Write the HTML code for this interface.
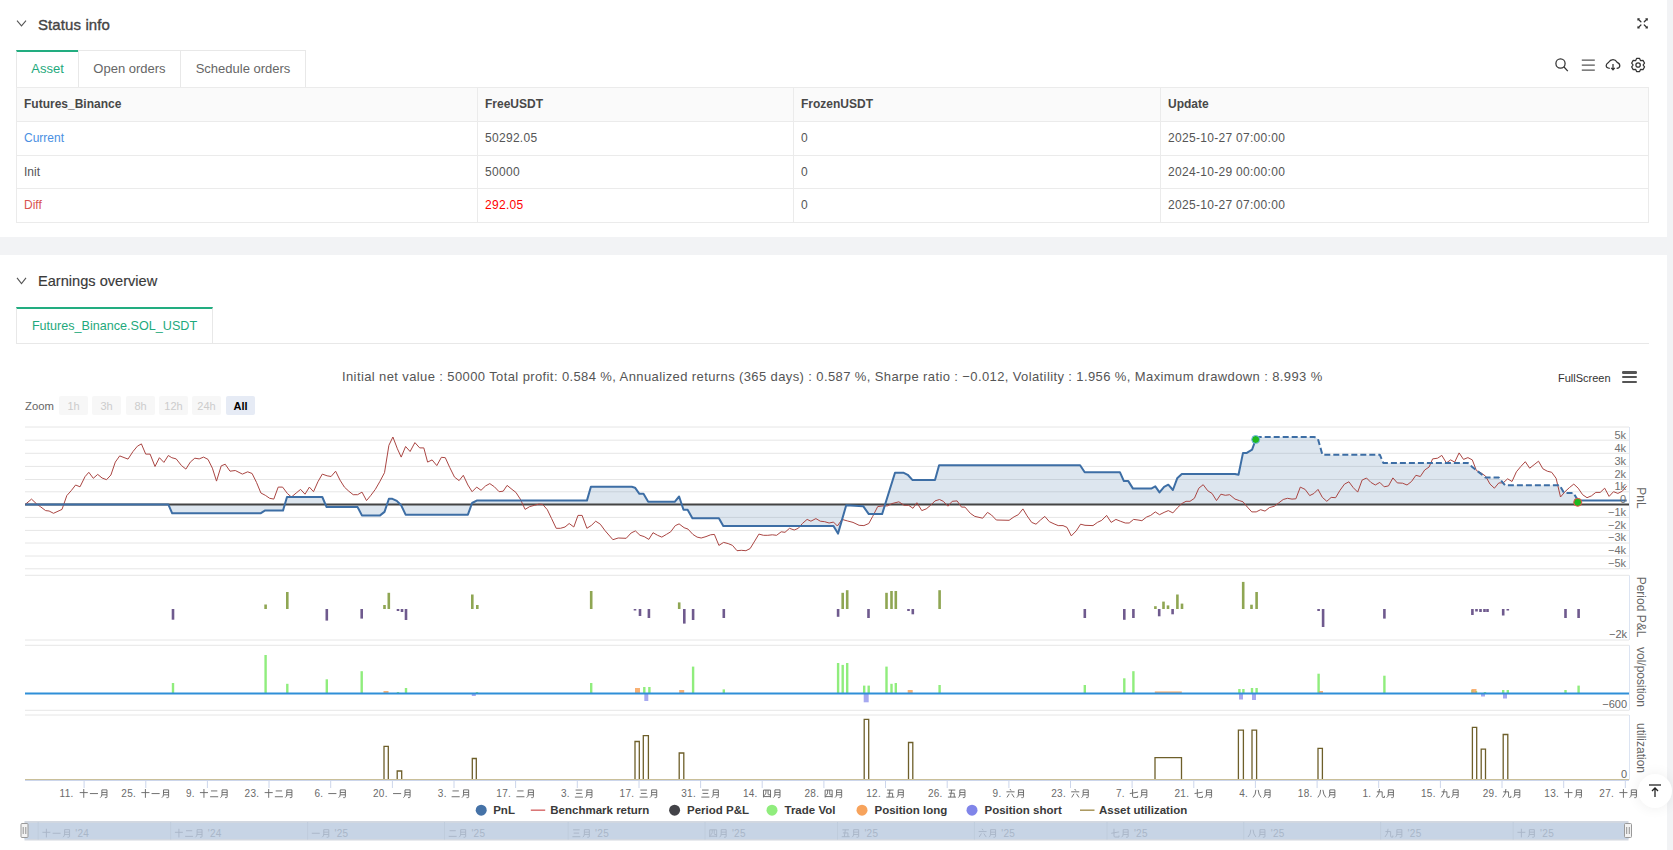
<!DOCTYPE html>
<html><head><meta charset="utf-8">
<style>
*{box-sizing:border-box;margin:0;padding:0}
html,body{width:1673px;height:850px;overflow:hidden;background:#f2f3f5;font-family:"Liberation Sans",sans-serif;color:#333}
.abs{position:absolute}
.panel{position:absolute;left:0;width:1667px;background:#fff}
.title{position:absolute;font-size:15px;color:#333;white-space:nowrap}
.chev{position:absolute;width:7px;height:7px;border-right:1.3px solid #666;border-bottom:1.3px solid #666;transform:rotate(45deg)}
.tab{position:absolute;height:37px;border:1px solid #e8e8e8;border-bottom:none;font-size:13px;color:#666;text-align:center;line-height:36px;background:#fff}
.tab.on{color:#1ea97c;border-top:2px solid #22ad80;line-height:34px}
table{position:absolute;border-collapse:collapse;font-size:12px}
td{border:1px solid #ebebeb;padding:0 0 0 7px;color:#555;white-space:nowrap}
td.n{letter-spacing:0.3px}
tr.h td{background:#fafafa;font-weight:bold;color:#484848;height:34px;padding-bottom:1.5px}
tr.r td{height:33.5px}
.ctext{position:absolute;font-size:13px;color:#333;white-space:nowrap}
.zb{position:absolute;top:396px;width:29px;height:19px;background:#f7f7f7;border-radius:2px;font-size:11px;color:#ccc;text-align:center;line-height:20.5px}
</style></head><body>
<div class="panel" style="top:0;height:237px">
  <svg class="abs" style="left:0;top:0" width="40" height="40"><path d="M17,20.6 L21.5,25.8 L26,20.6" fill="none" stroke="#555" stroke-width="1.1"/></svg>
  <div class="title" style="left:38px;top:16px;font-size:15px;color:#444;-webkit-text-stroke:0.35px #444;letter-spacing:0.1px">Status info</div>
  <svg class="abs" style="left:1630px;top:12px" width="24" height="24" viewBox="1630 12 24 24"><g stroke="#333" stroke-width="1.3" fill="none" stroke-linecap="round"><path d="M1638.3,19.2 L1640.9,21.8 M1646.9,19.2 L1644.3,21.8 M1638.3,27.6 L1640.9,25 M1646.9,27.6 L1644.3,25"/></g><g fill="#333"><path d="M1637.3,18.2 L1640.2,18.6 L1637.7,21.1 Z M1647.9,18.2 L1647.5,21.1 L1645,18.6 Z M1637.3,28.6 L1637.7,25.7 L1640.2,28.2 Z M1647.9,28.6 L1645,28.2 L1647.5,25.7 Z"/></g></svg>
  <div class="tab on" style="left:16px;top:50px;width:63px">Asset</div>
  <div class="tab" style="left:78px;top:50px;width:103px">Open orders</div>
  <div class="tab" style="left:180px;top:50px;width:126px">Schedule orders</div>
  <svg class="abs" style="left:1550px;top:52px" width="100" height="26" viewBox="1550 52 100 26"><g stroke="#333" stroke-width="1.25" fill="none">
   <circle cx="1560.5" cy="63.5" r="4.6"/><path d="M1563.8,66.8 L1567.8,71.1"/>
   <path d="M1581.8,60.1 H1594.8 M1581.8,65.2 H1594.8 M1581.8,70.2 H1594.8" stroke="#555"/>
   <path d="M1609.8,68.3 C1607.5,68.3 1606.2,67 1606.2,65.6 C1606.2,64.3 1607.2,63.3 1608.4,62.5 C1609.4,61 1610.6,59.7 1613,59.7 C1615.3,59.7 1616.3,61 1617.2,62.4 C1618.7,63 1619.8,64.1 1619.8,65.8 C1619.8,67.3 1618.6,68.3 1616.6,68.3"/><path d="M1613,64 V69.6 M1611.2,67.9 L1613,69.8 L1614.8,67.9"/>
   <circle cx="1638.1" cy="65" r="2.2"/>
   <path d="M1636.59,58.47 L1639.61,58.47 L1640.60,60.67 L1643.00,60.43 L1644.51,63.04 L1643.10,65.00 L1644.51,66.96 L1643.00,69.57 L1640.60,69.33 L1639.61,71.53 L1636.59,71.53 L1635.60,69.33 L1633.20,69.57 L1631.69,66.96 L1633.10,65.00 L1631.69,63.04 L1633.20,60.43 L1635.60,60.67 Z" stroke-linejoin="round"/>
  </g></svg>
  <table style="left:16px;top:87px;width:1633px">
   <tr class="h"><td style="width:461px">Futures_Binance</td><td style="width:316px">FreeUSDT</td><td style="width:367px">FrozenUSDT</td><td>Update</td></tr>
   <tr class="r"><td style="color:#4a90e2">Current</td><td class="n">50292.05</td><td class="n">0</td><td class="n">2025-10-27 07:00:00</td></tr>
   <tr class="r"><td>Init</td><td class="n">50000</td><td class="n">0</td><td class="n">2024-10-29 00:00:00</td></tr>
   <tr class="r"><td style="color:#d9534f">Diff</td><td class="n" style="color:#f00">292.05</td><td class="n">0</td><td class="n">2025-10-27 07:00:00</td></tr>
  </table>
</div>
<div class="panel" style="top:255px;height:595px">
  <svg class="abs" style="left:0;top:0" width="40" height="40"><path d="M17,22.9 L21.5,28.6 L26,22.9" fill="none" stroke="#555" stroke-width="1.1"/></svg>
  <div class="title" style="left:38px;top:17.5px;font-size:14.6px;color:#3a3a3a;-webkit-text-stroke:0.15px #333">Earnings overview</div>
  <div class="abs" style="left:16px;top:88px;width:1633px;height:1px;background:#e8e8e8"></div>
  <div class="tab on" style="left:16px;top:52px;width:197px;height:36px;font-size:12.6px">Futures_Binance.SOL_USDT</div>
</div>
<div class="ctext" style="left:342px;top:369px;color:#555;letter-spacing:0.39px">Initial net value : 50000 Total profit: 0.584 %, Annualized returns (365 days) : 0.587 %, Sharpe ratio : −0.012, Volatility : 1.956 %, Maximum drawdown : 8.993 %</div>
<div class="ctext" style="left:1558px;top:372px;font-size:11px">FullScreen</div>
<div class="abs" style="left:1622px;top:371.2px;width:15px;height:2.4px;background:#555;border-radius:1.2px"></div>
<div class="abs" style="left:1622px;top:375.9px;width:15px;height:2.4px;background:#555;border-radius:1.2px"></div>
<div class="abs" style="left:1622px;top:380.6px;width:15px;height:2.4px;background:#555;border-radius:1.2px"></div>
<div class="ctext" style="left:25px;top:400px;font-size:11.3px;color:#666">Zoom</div>
<div class="zb" style="left:59px">1h</div>
<div class="zb" style="left:92px">3h</div>
<div class="zb" style="left:126px">8h</div>
<div class="zb" style="left:159px">12h</div>
<div class="zb" style="left:192px">24h</div>
<div class="zb" style="left:226px;background:#e6ebf5;color:#000;font-weight:bold">All</div>
<svg width="1673" height="850" viewBox="0 0 1673 850" style="position:absolute;left:0;top:0">
<line x1="25" x2="1629" y1="427" y2="427" stroke="#e6e6e6" stroke-width="1"/>
<line x1="25" x2="1629" y1="440.2" y2="440.2" stroke="#e6e6e6" stroke-width="1"/>
<line x1="25" x2="1629" y1="453.3" y2="453.3" stroke="#e6e6e6" stroke-width="1"/>
<line x1="25" x2="1629" y1="466.4" y2="466.4" stroke="#e6e6e6" stroke-width="1"/>
<line x1="25" x2="1629" y1="479.5" y2="479.5" stroke="#e6e6e6" stroke-width="1"/>
<line x1="25" x2="1629" y1="491.8" y2="491.8" stroke="#e6e6e6" stroke-width="1"/>
<line x1="25" x2="1629" y1="504.4" y2="504.4" stroke="#e6e6e6" stroke-width="1"/>
<line x1="25" x2="1629" y1="517.4" y2="517.4" stroke="#e6e6e6" stroke-width="1"/>
<line x1="25" x2="1629" y1="530.4" y2="530.4" stroke="#e6e6e6" stroke-width="1"/>
<line x1="25" x2="1629" y1="543" y2="543" stroke="#e6e6e6" stroke-width="1"/>
<line x1="25" x2="1629" y1="556" y2="556" stroke="#e6e6e6" stroke-width="1"/>
<line x1="25" x2="1629" y1="568.8" y2="568.8" stroke="#e6e6e6" stroke-width="1"/>
<line x1="1629.5" x2="1629.5" y1="427" y2="569" stroke="#dce4f2" stroke-width="1"/>
<path d="M25.3,504.4 L168.3,504.4 L172.2,513.3 L260.5,513.3 L264.8,510.6 L283.0,510.6 L287.0,497.0 L322.3,497.0 L326.6,507.1 L357.6,507.1 L361.9,515.4 L380.1,515.4 L384.5,511.9 L388.9,498.8 L392.4,498.8 L396.8,500.9 L401.2,505.3 L405.6,514.7 L467.9,514.7 L472.1,503.0 L476.7,500.6 L586.9,500.6 L590.9,486.8 L631.8,486.8 L635.0,487.7 L639.4,493.8 L643.5,493.8 L648.2,501.8 L674.7,501.8 L679.1,496.5 L683.5,509.7 L687.6,509.7 L692.4,518.2 L718.9,518.2 L723.3,526.1 L833.5,526.1 L838.0,533.6 L846.2,505.3 L863.2,506.2 L868.8,514.1 L882.1,514.1 L895.0,472.7 L903.3,472.7 L907.7,474.8 L912.6,480.1 L935.0,480.1 L939.1,465.2 L1080.1,465.2 L1084.7,472.3 L1120.0,472.3 L1123.9,481.1 L1128.3,481.1 L1133.0,488.6 L1151.2,488.6 L1155.3,486.4 L1159.5,492.4 L1164.1,486.8 L1168.3,484.7 L1172.9,490.0 L1177.2,478.3 L1181.8,474.1 L1235.0,474.1 L1238.5,474.8 L1243.0,452.9 L1246.8,452.9 L1252.1,449.7 L1255.7,439.5 L1255.7,437.0 L1314.5,437.0 L1318.0,439.1 L1322.4,454.7 L1379.8,454.7 L1383.3,462.9 L1467.9,462.9 L1472.3,467.0 L1476.7,470.5 L1485.6,477.6 L1498.8,477.6 L1505.0,485.3 L1559.7,485.3 L1564.1,492.9 L1573.4,492.9 L1577.7,500.0 L1577.7,500.5 L1577.7,504.4 L25,504.4 Z" fill="#4572a7" fill-opacity="0.18" stroke="none"/>
<line x1="25" x2="1629" y1="504.4" y2="504.4" stroke="#444" stroke-width="2"/>
<path d="M25.3,504.4 L31.5,499.1 L36.8,504.1 L40.3,506.6 L45.6,510.6 L49.1,511.0 L53.5,513.3 L62.0,509.4 L66.8,495.6 L71.2,490.7 L75.6,485.0 L80.0,486.8 L85.0,476.7 L88.8,472.3 L93.3,478.3 L97.7,474.4 L102.1,478.0 L106.5,479.7 L110.9,475.0 L115.3,462.1 L119.7,455.9 L128.0,459.1 L133.0,451.5 L137.4,446.2 L141.4,443.9 L145.7,454.1 L150.1,454.1 L155.0,466.5 L159.4,457.7 L163.9,462.4 L168.3,455.5 L171.8,457.7 L176.2,458.9 L181.5,465.6 L185.9,469.1 L190.3,462.1 L194.8,458.2 L199.2,458.9 L203.6,457.1 L208.0,459.4 L212.4,468.2 L216.5,481.1 L221.2,465.9 L225.2,464.2 L230.0,471.2 L235.3,470.5 L242.4,474.1 L247.7,471.8 L252.1,473.5 L256.5,482.4 L260.9,493.0 L265.3,495.3 L269.7,498.3 L273.8,499.1 L278.2,487.1 L282.6,487.1 L287.4,493.5 L291.4,497.0 L296.2,493.0 L300.6,489.4 L305.0,494.2 L309.4,487.1 L313.5,491.7 L317.9,481.8 L322.3,474.1 L327.1,475.8 L331.1,476.5 L335.6,471.2 L340.0,480.1 L344.4,487.1 L348.8,491.2 L353.2,494.7 L357.6,494.7 L362.0,492.1 L366.5,500.6 L370.9,495.3 L375.3,489.4 L379.7,481.8 L384.5,472.7 L388.9,445.3 L392.9,437.0 L397.4,448.8 L401.2,457.1 L405.6,446.5 L410.1,451.5 L414.9,442.6 L419.7,447.9 L423.8,447.9 L427.6,462.1 L432.1,459.9 L436.8,465.6 L441.4,457.3 L445.3,457.7 L449.7,467.4 L454.5,477.1 L459.1,480.6 L463.3,475.3 L467.9,485.0 L472.1,491.7 L476.7,487.1 L481.0,490.3 L485.6,485.9 L489.8,483.6 L494.4,486.8 L499.1,491.7 L503.2,491.2 L507.1,485.4 L512.0,489.4 L515.9,492.4 L520.3,499.1 L525.1,509.4 L529.7,506.6 L534.5,505.3 L538.9,504.1 L542.7,504.4 L547.3,509.7 L551.6,518.6 L556.2,528.3 L560.4,528.3 L565.0,527.0 L569.2,523.5 L573.8,527.0 L578.0,515.4 L582.1,515.4 L586.9,528.3 L591.5,525.3 L595.7,521.2 L600.3,524.2 L605.0,530.6 L612.9,539.7 L618.2,538.0 L626.2,538.3 L631.1,533.0 L635.4,530.9 L640.0,535.3 L644.2,536.6 L648.8,539.4 L653.0,532.7 L657.6,535.3 L661.8,537.1 L666.4,534.4 L670.7,531.8 L675.3,525.6 L679.1,523.9 L684.1,527.7 L688.0,529.1 L692.9,534.4 L697.1,537.1 L701.2,538.0 L706.0,536.6 L710.6,534.8 L714.4,534.4 L718.9,545.4 L723.6,542.4 L728.2,543.6 L732.5,545.4 L737.0,550.7 L741.3,550.3 L745.9,550.7 L750.1,548.6 L754.7,541.1 L758.9,534.1 L763.5,535.3 L767.8,535.3 L772.3,534.8 L776.6,535.3 L781.2,531.8 L785.0,532.3 L789.5,528.3 L794.2,530.0 L798.3,528.3 L802.4,523.5 L807.1,519.4 L810.9,521.2 L815.9,518.6 L820.3,521.2 L824.7,521.7 L829.1,523.0 L833.5,522.1 L837.4,526.0 L842.0,519.4 L847.3,520.9 L853.0,522.4 L859.1,525.3 L863.9,525.6 L868.8,523.5 L872.7,516.4 L877.7,506.6 L883.0,505.9 L887.4,505.9 L891.8,503.6 L898.9,501.8 L904.1,505.3 L908.6,505.3 L913.0,508.3 L916.9,502.7 L921.8,510.6 L926.2,508.9 L930.6,505.3 L935.0,500.9 L939.5,499.5 L943.3,501.3 L947.9,506.2 L952.2,501.3 L957.1,500.9 L961.5,507.1 L965.0,507.1 L970.3,513.3 L974.8,516.4 L982.7,518.2 L987.5,512.4 L991.5,515.0 L996.3,520.0 L1009.1,520.3 L1014.1,516.8 L1018.3,514.7 L1022.9,508.9 L1027.1,515.9 L1031.7,522.4 L1036.0,524.2 L1040.5,520.0 L1044.8,516.4 L1049.4,521.7 L1054.1,523.9 L1058.2,525.6 L1063.0,525.6 L1067.0,527.4 L1071.3,535.9 L1076.2,530.9 L1080.6,524.2 L1085.0,525.3 L1093.0,525.6 L1097.4,522.4 L1101.8,520.3 L1106.6,515.4 L1111.2,522.4 L1115.9,519.4 L1120.3,521.2 L1125.3,523.0 L1129.2,523.0 L1133.6,519.4 L1138.0,520.0 L1141.9,520.7 L1146.5,517.1 L1150.7,515.4 L1155.3,511.9 L1159.5,514.7 L1164.1,512.4 L1168.3,510.6 L1172.9,512.9 L1177.2,508.0 L1181.8,503.6 L1186.0,501.3 L1190.0,501.3 L1194.4,498.3 L1198.8,488.2 L1203.2,484.7 L1207.7,490.7 L1212.1,493.5 L1216.5,500.6 L1220.9,494.2 L1225.3,495.3 L1229.7,494.7 L1235.0,499.1 L1239.4,500.6 L1243.0,501.8 L1247.4,507.1 L1251.8,511.9 L1256.2,511.9 L1260.6,509.7 L1265.0,511.1 L1269.4,507.6 L1274.4,506.2 L1278.6,503.0 L1283.2,499.5 L1287.4,498.3 L1292.0,499.1 L1295.9,498.8 L1300.3,487.1 L1305.1,489.4 L1309.7,495.6 L1313.9,493.5 L1318.0,489.4 L1322.4,497.4 L1326.8,501.3 L1331.2,497.4 L1335.6,497.7 L1340.0,490.3 L1344.5,484.1 L1348.9,481.8 L1353.3,487.7 L1357.7,492.1 L1362.1,480.1 L1366.5,478.0 L1370.9,482.4 L1375.3,485.0 L1379.8,482.4 L1384.2,486.8 L1388.5,485.9 L1392.9,477.9 L1397.3,482.9 L1402.6,483.2 L1407.0,485.0 L1411.5,481.5 L1415.9,475.3 L1420.3,476.5 L1424.7,470.0 L1429.1,467.0 L1432.6,458.9 L1437.6,458.2 L1441.8,455.4 L1446.4,462.9 L1450.6,459.9 L1454.7,462.1 L1459.1,452.9 L1463.5,459.4 L1467.9,457.6 L1472.3,459.9 L1476.4,470.5 L1481.2,473.0 L1485.6,476.2 L1490.0,484.1 L1494.4,488.2 L1498.8,482.9 L1503.2,482.9 L1507.6,478.8 L1512.0,481.5 L1516.4,471.8 L1520.8,466.5 L1525.3,461.7 L1529.7,468.2 L1534.1,464.7 L1538.5,461.2 L1542.9,468.8 L1547.3,471.2 L1551.7,472.3 L1556.1,478.3 L1560.5,497.0 L1565.0,491.7 L1569.4,487.6 L1573.8,484.1 L1578.2,488.2 L1582.6,494.7 L1587.0,497.7 L1591.4,495.9 L1595.8,492.4 L1600.2,492.4 L1604.7,488.2 L1609.1,496.4 L1613.5,491.7 L1617.9,493.4 L1622.3,491.2 L1626.7,485.9" fill="none" stroke="#aa4643" stroke-width="1" stroke-linejoin="round"/>
<path d="M25.3,504.4 L168.3,504.4 L172.2,513.3 L260.5,513.3 L264.8,510.6 L283.0,510.6 L287.0,497.0 L322.3,497.0 L326.6,507.1 L357.6,507.1 L361.9,515.4 L380.1,515.4 L384.5,511.9 L388.9,498.8 L392.4,498.8 L396.8,500.9 L401.2,505.3 L405.6,514.7 L467.9,514.7 L472.1,503.0 L476.7,500.6 L586.9,500.6 L590.9,486.8 L631.8,486.8 L635.0,487.7 L639.4,493.8 L643.5,493.8 L648.2,501.8 L674.7,501.8 L679.1,496.5 L683.5,509.7 L687.6,509.7 L692.4,518.2 L718.9,518.2 L723.3,526.1 L833.5,526.1 L838.0,533.6 L846.2,505.3 L863.2,506.2 L868.8,514.1 L882.1,514.1 L895.0,472.7 L903.3,472.7 L907.7,474.8 L912.6,480.1 L935.0,480.1 L939.1,465.2 L1080.1,465.2 L1084.7,472.3 L1120.0,472.3 L1123.9,481.1 L1128.3,481.1 L1133.0,488.6 L1151.2,488.6 L1155.3,486.4 L1159.5,492.4 L1164.1,486.8 L1168.3,484.7 L1172.9,490.0 L1177.2,478.3 L1181.8,474.1 L1235.0,474.1 L1238.5,474.8 L1243.0,452.9 L1246.8,452.9 L1252.1,449.7 L1255.7,439.5" fill="none" stroke="#3d6ea5" stroke-width="2" stroke-linejoin="round"/>
<path d="M1255.7,437.0 L1314.5,437.0 L1318.0,439.1 L1322.4,454.7 L1379.8,454.7 L1383.3,462.9 L1467.9,462.9 L1472.3,467.0 L1476.7,470.5 L1485.6,477.6 L1498.8,477.6 L1505.0,485.3 L1559.7,485.3 L1564.1,492.9 L1573.4,492.9 L1577.7,500.0" fill="none" stroke="#3d6ea5" stroke-width="2" stroke-dasharray="6,3" stroke-linejoin="round"/>
<path d="M1577.7,500.5 L1626.7,500.5" fill="none" stroke="#3d6ea5" stroke-width="2"/>
<circle cx="1255.7" cy="439.5" r="4" fill="#1fb81f" stroke="#7ab8f0" stroke-width="1"/>
<circle cx="1577.7" cy="502.3" r="4" fill="#1fb81f" stroke="#f05050" stroke-width="1"/>
<text x="1626" y="438.5" text-anchor="end" font-family='"Liberation Sans", sans-serif' font-size="11" fill="#707070">5k</text>
<text x="1626" y="451.6" text-anchor="end" font-family='"Liberation Sans", sans-serif' font-size="11" fill="#707070">4k</text>
<text x="1626" y="464.7" text-anchor="end" font-family='"Liberation Sans", sans-serif' font-size="11" fill="#707070">3k</text>
<text x="1626" y="477.8" text-anchor="end" font-family='"Liberation Sans", sans-serif' font-size="11" fill="#707070">2k</text>
<text x="1626" y="490.3" text-anchor="end" font-family='"Liberation Sans", sans-serif' font-size="11" fill="#707070">1k</text>
<text x="1626" y="502.8" text-anchor="end" font-family='"Liberation Sans", sans-serif' font-size="11" fill="#707070">0</text>
<text x="1626" y="515.8" text-anchor="end" font-family='"Liberation Sans", sans-serif' font-size="11" fill="#707070">−1k</text>
<text x="1626" y="528.8" text-anchor="end" font-family='"Liberation Sans", sans-serif' font-size="11" fill="#707070">−2k</text>
<text x="1626" y="541.4" text-anchor="end" font-family='"Liberation Sans", sans-serif' font-size="11" fill="#707070">−3k</text>
<text x="1626" y="554.4" text-anchor="end" font-family='"Liberation Sans", sans-serif' font-size="11" fill="#707070">−4k</text>
<text x="1626" y="567.1999999999999" text-anchor="end" font-family='"Liberation Sans", sans-serif' font-size="11" fill="#707070">−5k</text>
<text transform="translate(1637,498) rotate(90)" text-anchor="middle" font-family='"Liberation Sans", sans-serif' font-size="12" fill="#666">PnL</text>
<text transform="translate(1637,607) rotate(90)" text-anchor="middle" font-family='"Liberation Sans", sans-serif' font-size="12" fill="#666">Period P&amp;L</text>
<text transform="translate(1637,677) rotate(90)" text-anchor="middle" font-family='"Liberation Sans", sans-serif' font-size="12" fill="#666">vol/position</text>
<text transform="translate(1637,748) rotate(90)" text-anchor="middle" font-family='"Liberation Sans", sans-serif' font-size="12" fill="#666">utilization</text>
<line x1="25" x2="1629" y1="575.3" y2="575.3" stroke="#e6e6e6"/>
<line x1="25" x2="1629" y1="640" y2="640" stroke="#e6e6e6"/>
<line x1="1629.5" x2="1629.5" y1="575.3" y2="640" stroke="#dce4f2"/>
<line x1="25" x2="1629" y1="645.3" y2="645.3" stroke="#e6e6e6"/>
<line x1="25" x2="1629" y1="710.3" y2="710.3" stroke="#e6e6e6"/>
<line x1="1629.5" x2="1629.5" y1="645.3" y2="710.3" stroke="#dce4f2"/>
<line x1="25" x2="1629" y1="715" y2="715" stroke="#e6e6e6"/>
<line x1="25" x2="1629" y1="780" y2="780" stroke="#e6e6e6"/>
<line x1="1629.5" x2="1629.5" y1="715" y2="780" stroke="#dce4f2"/>
<text x="1627" y="638" text-anchor="end" font-family='"Liberation Sans", sans-serif' font-size="11" fill="#666">−2k</text>
<text x="1627" y="708" text-anchor="end" font-family='"Liberation Sans", sans-serif' font-size="11" fill="#666">−600</text>
<text x="1627" y="778" text-anchor="end" font-family='"Liberation Sans", sans-serif' font-size="11" fill="#666">0</text>
<rect x="171.7" y="609" width="2.6" height="10.7" fill="#6f5a8e"/>
<rect x="264.3" y="604.5" width="2.6" height="4.5" fill="#8fa653"/>
<rect x="286.0" y="592.0" width="2.6" height="17.0" fill="#8fa653"/>
<rect x="325.5" y="609" width="2.6" height="11.6" fill="#6f5a8e"/>
<rect x="360.4" y="609" width="2.6" height="9.6" fill="#6f5a8e"/>
<rect x="383.2" y="605.0" width="2.6" height="4.0" fill="#8fa653"/>
<rect x="387.5" y="592.8" width="2.6" height="16.2" fill="#8fa653"/>
<rect x="396.7" y="609" width="2.6" height="2.0" fill="#6f5a8e"/>
<rect x="400.7" y="609" width="2.6" height="3.0" fill="#6f5a8e"/>
<rect x="404.7" y="609" width="2.6" height="11.0" fill="#6f5a8e"/>
<rect x="471.0" y="594.5" width="2.6" height="14.5" fill="#8fa653"/>
<rect x="476.0" y="605.0" width="2.6" height="4.0" fill="#8fa653"/>
<rect x="589.9" y="591.0" width="2.6" height="18.0" fill="#8fa653"/>
<rect x="633.7" y="609" width="2.6" height="1.5" fill="#6f5a8e"/>
<rect x="638.7" y="609" width="2.6" height="7.0" fill="#6f5a8e"/>
<rect x="647.6" y="609" width="2.6" height="9.0" fill="#6f5a8e"/>
<rect x="677.9" y="602.4" width="2.6" height="6.6" fill="#8fa653"/>
<rect x="683.0" y="609" width="2.6" height="14.6" fill="#6f5a8e"/>
<rect x="691.8" y="609" width="2.6" height="11.0" fill="#6f5a8e"/>
<rect x="722.5" y="609" width="2.6" height="9.0" fill="#6f5a8e"/>
<rect x="836.8" y="609" width="2.6" height="7.8" fill="#6f5a8e"/>
<rect x="841.4" y="592.8" width="2.6" height="16.2" fill="#8fa653"/>
<rect x="845.9" y="590.2" width="2.6" height="18.8" fill="#8fa653"/>
<rect x="867.2" y="609" width="2.6" height="9.0" fill="#6f5a8e"/>
<rect x="885.2" y="592.8" width="2.6" height="16.2" fill="#8fa653"/>
<rect x="890.2" y="591.0" width="2.6" height="18.0" fill="#8fa653"/>
<rect x="894.5" y="591.0" width="2.6" height="18.0" fill="#8fa653"/>
<rect x="907.2" y="609" width="2.6" height="2.0" fill="#6f5a8e"/>
<rect x="911.5" y="609" width="2.6" height="5.3" fill="#6f5a8e"/>
<rect x="938.3" y="590.2" width="2.6" height="18.8" fill="#8fa653"/>
<rect x="1083.5" y="609" width="2.6" height="9.0" fill="#6f5a8e"/>
<rect x="1123.0" y="609" width="2.6" height="10.8" fill="#6f5a8e"/>
<rect x="1132.1" y="609" width="2.6" height="9.0" fill="#6f5a8e"/>
<rect x="1154.1" y="606.2" width="2.6" height="2.8" fill="#8fa653"/>
<rect x="1157.9" y="609" width="2.6" height="7.3" fill="#6f5a8e"/>
<rect x="1162.2" y="601.6" width="2.6" height="7.4" fill="#8fa653"/>
<rect x="1166.7" y="605.4" width="2.6" height="3.6" fill="#8fa653"/>
<rect x="1171.3" y="609" width="2.6" height="5.3" fill="#6f5a8e"/>
<rect x="1176.1" y="594.5" width="2.6" height="14.5" fill="#8fa653"/>
<rect x="1180.7" y="603.6" width="2.6" height="5.4" fill="#8fa653"/>
<rect x="1241.9" y="581.9" width="2.6" height="27.1" fill="#8fa653"/>
<rect x="1250.2" y="604.7" width="2.6" height="4.3" fill="#8fa653"/>
<rect x="1255.3" y="592.0" width="2.6" height="17.0" fill="#8fa653"/>
<rect x="1317.3" y="609" width="2.6" height="2.0" fill="#6f5a8e"/>
<rect x="1321.8" y="609" width="2.6" height="18.0" fill="#6f5a8e"/>
<rect x="1383.1" y="609" width="2.6" height="9.6" fill="#6f5a8e"/>
<rect x="1471.1" y="609" width="2.6" height="6.0" fill="#6f5a8e"/>
<rect x="1475.2" y="609" width="2.6" height="2.5" fill="#6f5a8e"/>
<rect x="1479.2" y="609" width="2.6" height="3.0" fill="#6f5a8e"/>
<rect x="1483.2" y="609" width="2.6" height="3.0" fill="#6f5a8e"/>
<rect x="1486.2" y="609" width="2.6" height="3.0" fill="#6f5a8e"/>
<rect x="1501.9" y="609" width="2.6" height="6.5" fill="#6f5a8e"/>
<rect x="1506.5" y="609" width="2.6" height="1.5" fill="#6f5a8e"/>
<rect x="1564.2" y="609" width="2.6" height="9.0" fill="#6f5a8e"/>
<rect x="1577.3" y="609" width="2.6" height="9.0" fill="#6f5a8e"/>
<rect x="171.8" y="683.0" width="2.4" height="10.4" fill="#90ed7d"/>
<rect x="264.4" y="655.0" width="2.4" height="38.4" fill="#90ed7d"/>
<rect x="286.1" y="683.8" width="2.4" height="9.6" fill="#90ed7d"/>
<rect x="325.6" y="679.3" width="2.4" height="14.1" fill="#90ed7d"/>
<rect x="360.5" y="671.2" width="2.4" height="22.2" fill="#90ed7d"/>
<rect x="396.8" y="692.0" width="2.4" height="1.4" fill="#90ed7d"/>
<rect x="404.8" y="688.0" width="2.4" height="5.4" fill="#90ed7d"/>
<rect x="475.8" y="692.0" width="2.4" height="1.4" fill="#90ed7d"/>
<rect x="590.0" y="683.0" width="2.4" height="10.4" fill="#90ed7d"/>
<rect x="643.1" y="687.0" width="2.4" height="6.4" fill="#90ed7d"/>
<rect x="648.2" y="687.0" width="2.4" height="6.4" fill="#90ed7d"/>
<rect x="691.9" y="666.6" width="2.4" height="26.8" fill="#90ed7d"/>
<rect x="722.6" y="689.4" width="2.4" height="4.0" fill="#90ed7d"/>
<rect x="836.9" y="663.0" width="2.4" height="30.4" fill="#90ed7d"/>
<rect x="841.5" y="664.9" width="2.4" height="28.5" fill="#90ed7d"/>
<rect x="846.0" y="663.0" width="2.4" height="30.4" fill="#90ed7d"/>
<rect x="863.0" y="685.6" width="2.4" height="7.8" fill="#90ed7d"/>
<rect x="867.5" y="685.6" width="2.4" height="7.8" fill="#90ed7d"/>
<rect x="885.3" y="666.6" width="2.4" height="26.8" fill="#90ed7d"/>
<rect x="890.3" y="683.8" width="2.4" height="9.6" fill="#90ed7d"/>
<rect x="894.6" y="683.0" width="2.4" height="10.4" fill="#90ed7d"/>
<rect x="938.4" y="685.0" width="2.4" height="8.4" fill="#90ed7d"/>
<rect x="1083.6" y="685.0" width="2.4" height="8.4" fill="#90ed7d"/>
<rect x="1123.1" y="678.3" width="2.4" height="15.1" fill="#90ed7d"/>
<rect x="1132.2" y="671.2" width="2.4" height="22.2" fill="#90ed7d"/>
<rect x="1238.2" y="689.0" width="2.4" height="4.4" fill="#90ed7d"/>
<rect x="1242.2" y="689.0" width="2.4" height="4.4" fill="#90ed7d"/>
<rect x="1250.8" y="688.0" width="2.4" height="5.4" fill="#90ed7d"/>
<rect x="1255.4" y="688.0" width="2.4" height="5.4" fill="#90ed7d"/>
<rect x="1317.4" y="673.7" width="2.4" height="19.7" fill="#90ed7d"/>
<rect x="1383.2" y="675.7" width="2.4" height="17.7" fill="#90ed7d"/>
<rect x="1471.2" y="690.0" width="2.4" height="3.4" fill="#90ed7d"/>
<rect x="1474.8" y="691.0" width="2.4" height="2.4" fill="#90ed7d"/>
<rect x="1483.8" y="692.0" width="2.4" height="1.4" fill="#90ed7d"/>
<rect x="1502.0" y="690.0" width="2.4" height="3.4" fill="#90ed7d"/>
<rect x="1506.6" y="690.0" width="2.4" height="3.4" fill="#90ed7d"/>
<rect x="1564.3" y="690.0" width="2.4" height="3.4" fill="#90ed7d"/>
<rect x="1577.4" y="685.6" width="2.4" height="7.8" fill="#90ed7d"/>
<rect x="383.5" y="691" width="5" height="2.4" fill="#f7a35c" fill-opacity="0.85"/>
<rect x="635.0" y="688" width="5" height="5.4" fill="#f7a35c" fill-opacity="0.85"/>
<rect x="679.2" y="690" width="5" height="3.4" fill="#f7a35c" fill-opacity="0.85"/>
<rect x="907.7" y="690" width="5" height="3.4" fill="#f7a35c" fill-opacity="0.85"/>
<rect x="1154.8" y="691.4" width="27" height="2.0" fill="#f7a35c" fill-opacity="0.85"/>
<rect x="1319.0" y="691" width="4" height="2.4" fill="#f7a35c" fill-opacity="0.85"/>
<rect x="1471.5" y="689" width="5" height="4.4" fill="#f7a35c" fill-opacity="0.85"/>
<rect x="471.8" y="693.4" width="4" height="2.6" fill="#8085e9" fill-opacity="0.7"/>
<rect x="644.3" y="693.4" width="4" height="7.6" fill="#8085e9" fill-opacity="0.7"/>
<rect x="863.7" y="693.4" width="5" height="8.9" fill="#8085e9" fill-opacity="0.7"/>
<rect x="1239.0" y="693.4" width="4" height="6.1" fill="#8085e9" fill-opacity="0.7"/>
<rect x="1252.0" y="693.4" width="4" height="6.6" fill="#8085e9" fill-opacity="0.7"/>
<rect x="1481.0" y="693.4" width="4" height="3.1" fill="#8085e9" fill-opacity="0.7"/>
<rect x="1503.0" y="693.4" width="4" height="5.1" fill="#8085e9" fill-opacity="0.7"/>
<line x1="25" x2="1629" y1="693.4" y2="693.4" stroke="#2f8fd8" stroke-width="2"/>
<path d="M384.0,779.5 L384.0,746.3 L388.3,746.3 L388.3,779.5" fill="none" stroke="#6e5f2a" stroke-width="1.3"/>
<path d="M397.2,779.5 L397.2,771.0 L401.7,771.0 L401.7,779.5" fill="none" stroke="#6e5f2a" stroke-width="1.3"/>
<path d="M472.3,779.5 L472.3,758.5 L476.3,758.5 L476.3,779.5" fill="none" stroke="#6e5f2a" stroke-width="1.3"/>
<path d="M635.0,779.5 L635.0,741.5 L639.3,741.5 L639.3,779.5" fill="none" stroke="#6e5f2a" stroke-width="1.3"/>
<path d="M643.3,779.5 L643.3,735.7 L648.4,735.7 L648.4,779.5" fill="none" stroke="#6e5f2a" stroke-width="1.3"/>
<path d="M679.2,779.5 L679.2,753.0 L683.8,753.0 L683.8,779.5" fill="none" stroke="#6e5f2a" stroke-width="1.3"/>
<path d="M864.2,779.5 L864.2,719.3 L868.7,719.3 L868.7,779.5" fill="none" stroke="#6e5f2a" stroke-width="1.3"/>
<path d="M908.5,779.5 L908.5,742.5 L912.8,742.5 L912.8,779.5" fill="none" stroke="#6e5f2a" stroke-width="1.3"/>
<path d="M1155.0,779.5 L1155.0,757.7 L1181.5,757.7 L1181.5,779.5" fill="none" stroke="#6e5f2a" stroke-width="1.3"/>
<path d="M1238.4,779.5 L1238.4,730.1 L1243.4,730.1 L1243.4,779.5" fill="none" stroke="#6e5f2a" stroke-width="1.3"/>
<path d="M1252.0,779.5 L1252.0,730.1 L1256.6,730.1 L1256.6,779.5" fill="none" stroke="#6e5f2a" stroke-width="1.3"/>
<path d="M1318.0,779.5 L1318.0,748.3 L1322.4,748.3 L1322.4,779.5" fill="none" stroke="#6e5f2a" stroke-width="1.3"/>
<path d="M1472.4,779.5 L1472.4,727.4 L1476.7,727.4 L1476.7,779.5" fill="none" stroke="#6e5f2a" stroke-width="1.3"/>
<path d="M1481.2,779.5 L1481.2,749.2 L1485.5,749.2 L1485.5,779.5" fill="none" stroke="#6e5f2a" stroke-width="1.3"/>
<path d="M1503.2,779.5 L1503.2,734.5 L1507.8,734.5 L1507.8,779.5" fill="none" stroke="#6e5f2a" stroke-width="1.3"/>
<line x1="25" x2="1629" y1="779.5" y2="779.5" stroke="#c9bf9a" stroke-width="1"/>
<line x1="25" x2="1629" y1="780.5" y2="780.5" stroke="#ccd6eb" stroke-width="1"/>
<line x1="84.1" x2="84.1" y1="780" y2="788" stroke="#ccd6eb" stroke-width="1"/>
<text x="59.6" y="797" font-family='"Liberation Sans", sans-serif' font-size="10" fill="#6a6a6a" letter-spacing="0.3">11.</text>
<path transform="translate(79.35,789.00) scale(0.880)" d="M0.4,4.1 H9.6 M5,0 V10" fill="none" stroke="#6a6a6a" stroke-width="1.08"/>
<path transform="translate(89.55,789.00) scale(0.880)" d="M0.4,5.2 H9.6" fill="none" stroke="#6a6a6a" stroke-width="1.08"/>
<path transform="translate(99.75,789.00) scale(0.880)" d="M2.4,1 V6 Q2.4,8.6 0.6,9.8 M2.4,1 H8.2 V8.8 Q8.2,9.8 7.2,9.8 H5.8 M2.4,3.9 H8.2 M2.4,6.6 H8.2" fill="none" stroke="#6a6a6a" stroke-width="1.08"/>
<line x1="145.8" x2="145.8" y1="780" y2="788" stroke="#ccd6eb" stroke-width="1"/>
<text x="121.3" y="797" font-family='"Liberation Sans", sans-serif' font-size="10" fill="#6a6a6a" letter-spacing="0.3">25.</text>
<path transform="translate(141.00,789.00) scale(0.880)" d="M0.4,4.1 H9.6 M5,0 V10" fill="none" stroke="#6a6a6a" stroke-width="1.08"/>
<path transform="translate(151.20,789.00) scale(0.880)" d="M0.4,5.2 H9.6" fill="none" stroke="#6a6a6a" stroke-width="1.08"/>
<path transform="translate(161.40,789.00) scale(0.880)" d="M2.4,1 V6 Q2.4,8.6 0.6,9.8 M2.4,1 H8.2 V8.8 Q8.2,9.8 7.2,9.8 H5.8 M2.4,3.9 H8.2 M2.4,6.6 H8.2" fill="none" stroke="#6a6a6a" stroke-width="1.08"/>
<line x1="207.4" x2="207.4" y1="780" y2="788" stroke="#ccd6eb" stroke-width="1"/>
<text x="186.0" y="797" font-family='"Liberation Sans", sans-serif' font-size="10" fill="#6a6a6a" letter-spacing="0.3">9.</text>
<path transform="translate(199.55,789.00) scale(0.880)" d="M0.4,4.1 H9.6 M5,0 V10" fill="none" stroke="#6a6a6a" stroke-width="1.08"/>
<path transform="translate(209.75,789.00) scale(0.880)" d="M1.4,2.2 H8.6 M0.4,8.8 H9.6" fill="none" stroke="#6a6a6a" stroke-width="1.08"/>
<path transform="translate(219.95,789.00) scale(0.880)" d="M2.4,1 V6 Q2.4,8.6 0.6,9.8 M2.4,1 H8.2 V8.8 Q8.2,9.8 7.2,9.8 H5.8 M2.4,3.9 H8.2 M2.4,6.6 H8.2" fill="none" stroke="#6a6a6a" stroke-width="1.08"/>
<line x1="269.0" x2="269.0" y1="780" y2="788" stroke="#ccd6eb" stroke-width="1"/>
<text x="244.6" y="797" font-family='"Liberation Sans", sans-serif' font-size="10" fill="#6a6a6a" letter-spacing="0.3">23.</text>
<path transform="translate(264.30,789.00) scale(0.880)" d="M0.4,4.1 H9.6 M5,0 V10" fill="none" stroke="#6a6a6a" stroke-width="1.08"/>
<path transform="translate(274.50,789.00) scale(0.880)" d="M1.4,2.2 H8.6 M0.4,8.8 H9.6" fill="none" stroke="#6a6a6a" stroke-width="1.08"/>
<path transform="translate(284.70,789.00) scale(0.880)" d="M2.4,1 V6 Q2.4,8.6 0.6,9.8 M2.4,1 H8.2 V8.8 Q8.2,9.8 7.2,9.8 H5.8 M2.4,3.9 H8.2 M2.4,6.6 H8.2" fill="none" stroke="#6a6a6a" stroke-width="1.08"/>
<line x1="330.7" x2="330.7" y1="780" y2="788" stroke="#ccd6eb" stroke-width="1"/>
<text x="314.4" y="797" font-family='"Liberation Sans", sans-serif' font-size="10" fill="#6a6a6a" letter-spacing="0.3">6.</text>
<path transform="translate(327.95,789.00) scale(0.880)" d="M0.4,5.2 H9.6" fill="none" stroke="#6a6a6a" stroke-width="1.08"/>
<path transform="translate(338.15,789.00) scale(0.880)" d="M2.4,1 V6 Q2.4,8.6 0.6,9.8 M2.4,1 H8.2 V8.8 Q8.2,9.8 7.2,9.8 H5.8 M2.4,3.9 H8.2 M2.4,6.6 H8.2" fill="none" stroke="#6a6a6a" stroke-width="1.08"/>
<line x1="392.4" x2="392.4" y1="780" y2="788" stroke="#ccd6eb" stroke-width="1"/>
<text x="373.0" y="797" font-family='"Liberation Sans", sans-serif' font-size="10" fill="#6a6a6a" letter-spacing="0.3">20.</text>
<path transform="translate(392.70,789.00) scale(0.880)" d="M0.4,5.2 H9.6" fill="none" stroke="#6a6a6a" stroke-width="1.08"/>
<path transform="translate(402.90,789.00) scale(0.880)" d="M2.4,1 V6 Q2.4,8.6 0.6,9.8 M2.4,1 H8.2 V8.8 Q8.2,9.8 7.2,9.8 H5.8 M2.4,3.9 H8.2 M2.4,6.6 H8.2" fill="none" stroke="#6a6a6a" stroke-width="1.08"/>
<line x1="454.0" x2="454.0" y1="780" y2="788" stroke="#ccd6eb" stroke-width="1"/>
<text x="437.8" y="797" font-family='"Liberation Sans", sans-serif' font-size="10" fill="#6a6a6a" letter-spacing="0.3">3.</text>
<path transform="translate(451.25,789.00) scale(0.880)" d="M1.4,2.2 H8.6 M0.4,8.8 H9.6" fill="none" stroke="#6a6a6a" stroke-width="1.08"/>
<path transform="translate(461.45,789.00) scale(0.880)" d="M2.4,1 V6 Q2.4,8.6 0.6,9.8 M2.4,1 H8.2 V8.8 Q8.2,9.8 7.2,9.8 H5.8 M2.4,3.9 H8.2 M2.4,6.6 H8.2" fill="none" stroke="#6a6a6a" stroke-width="1.08"/>
<line x1="515.6" x2="515.6" y1="780" y2="788" stroke="#ccd6eb" stroke-width="1"/>
<text x="496.3" y="797" font-family='"Liberation Sans", sans-serif' font-size="10" fill="#6a6a6a" letter-spacing="0.3">17.</text>
<path transform="translate(516.00,789.00) scale(0.880)" d="M1.4,2.2 H8.6 M0.4,8.8 H9.6" fill="none" stroke="#6a6a6a" stroke-width="1.08"/>
<path transform="translate(526.20,789.00) scale(0.880)" d="M2.4,1 V6 Q2.4,8.6 0.6,9.8 M2.4,1 H8.2 V8.8 Q8.2,9.8 7.2,9.8 H5.8 M2.4,3.9 H8.2 M2.4,6.6 H8.2" fill="none" stroke="#6a6a6a" stroke-width="1.08"/>
<line x1="577.3" x2="577.3" y1="780" y2="788" stroke="#ccd6eb" stroke-width="1"/>
<text x="561.0" y="797" font-family='"Liberation Sans", sans-serif' font-size="10" fill="#6a6a6a" letter-spacing="0.3">3.</text>
<path transform="translate(574.55,789.00) scale(0.880)" d="M1.2,1.2 H8.8 M1.8,5 H8.2 M0.4,9.2 H9.6" fill="none" stroke="#6a6a6a" stroke-width="1.08"/>
<path transform="translate(584.75,789.00) scale(0.880)" d="M2.4,1 V6 Q2.4,8.6 0.6,9.8 M2.4,1 H8.2 V8.8 Q8.2,9.8 7.2,9.8 H5.8 M2.4,3.9 H8.2 M2.4,6.6 H8.2" fill="none" stroke="#6a6a6a" stroke-width="1.08"/>
<line x1="639.0" x2="639.0" y1="780" y2="788" stroke="#ccd6eb" stroke-width="1"/>
<text x="619.6" y="797" font-family='"Liberation Sans", sans-serif' font-size="10" fill="#6a6a6a" letter-spacing="0.3">17.</text>
<path transform="translate(639.30,789.00) scale(0.880)" d="M1.2,1.2 H8.8 M1.8,5 H8.2 M0.4,9.2 H9.6" fill="none" stroke="#6a6a6a" stroke-width="1.08"/>
<path transform="translate(649.50,789.00) scale(0.880)" d="M2.4,1 V6 Q2.4,8.6 0.6,9.8 M2.4,1 H8.2 V8.8 Q8.2,9.8 7.2,9.8 H5.8 M2.4,3.9 H8.2 M2.4,6.6 H8.2" fill="none" stroke="#6a6a6a" stroke-width="1.08"/>
<line x1="700.6" x2="700.6" y1="780" y2="788" stroke="#ccd6eb" stroke-width="1"/>
<text x="681.2" y="797" font-family='"Liberation Sans", sans-serif' font-size="10" fill="#6a6a6a" letter-spacing="0.3">31.</text>
<path transform="translate(700.95,789.00) scale(0.880)" d="M1.2,1.2 H8.8 M1.8,5 H8.2 M0.4,9.2 H9.6" fill="none" stroke="#6a6a6a" stroke-width="1.08"/>
<path transform="translate(711.15,789.00) scale(0.880)" d="M2.4,1 V6 Q2.4,8.6 0.6,9.8 M2.4,1 H8.2 V8.8 Q8.2,9.8 7.2,9.8 H5.8 M2.4,3.9 H8.2 M2.4,6.6 H8.2" fill="none" stroke="#6a6a6a" stroke-width="1.08"/>
<line x1="762.2" x2="762.2" y1="780" y2="788" stroke="#ccd6eb" stroke-width="1"/>
<text x="742.9" y="797" font-family='"Liberation Sans", sans-serif' font-size="10" fill="#6a6a6a" letter-spacing="0.3">14.</text>
<path transform="translate(762.60,789.00) scale(0.880)" d="M1,1.2 V9.6 M1,1.2 H9 V9.6 M1,8.6 H9 M3.8,1.2 V4.5 Q3.6,6.6 1.6,7.4 M6.2,1.2 V5.8 Q6.2,6.6 7,6.6 H9" fill="none" stroke="#6a6a6a" stroke-width="1.08"/>
<path transform="translate(772.80,789.00) scale(0.880)" d="M2.4,1 V6 Q2.4,8.6 0.6,9.8 M2.4,1 H8.2 V8.8 Q8.2,9.8 7.2,9.8 H5.8 M2.4,3.9 H8.2 M2.4,6.6 H8.2" fill="none" stroke="#6a6a6a" stroke-width="1.08"/>
<line x1="823.9" x2="823.9" y1="780" y2="788" stroke="#ccd6eb" stroke-width="1"/>
<text x="804.5" y="797" font-family='"Liberation Sans", sans-serif' font-size="10" fill="#6a6a6a" letter-spacing="0.3">28.</text>
<path transform="translate(824.25,789.00) scale(0.880)" d="M1,1.2 V9.6 M1,1.2 H9 V9.6 M1,8.6 H9 M3.8,1.2 V4.5 Q3.6,6.6 1.6,7.4 M6.2,1.2 V5.8 Q6.2,6.6 7,6.6 H9" fill="none" stroke="#6a6a6a" stroke-width="1.08"/>
<path transform="translate(834.45,789.00) scale(0.880)" d="M2.4,1 V6 Q2.4,8.6 0.6,9.8 M2.4,1 H8.2 V8.8 Q8.2,9.8 7.2,9.8 H5.8 M2.4,3.9 H8.2 M2.4,6.6 H8.2" fill="none" stroke="#6a6a6a" stroke-width="1.08"/>
<line x1="885.5" x2="885.5" y1="780" y2="788" stroke="#ccd6eb" stroke-width="1"/>
<text x="866.2" y="797" font-family='"Liberation Sans", sans-serif' font-size="10" fill="#6a6a6a" letter-spacing="0.3">12.</text>
<path transform="translate(885.90,789.00) scale(0.880)" d="M1.2,1.2 H8.8 M4.6,1.2 L3.4,9.2 M1.8,4.8 H7.6 V9.2 M0.4,9.2 H9.6" fill="none" stroke="#6a6a6a" stroke-width="1.08"/>
<path transform="translate(896.10,789.00) scale(0.880)" d="M2.4,1 V6 Q2.4,8.6 0.6,9.8 M2.4,1 H8.2 V8.8 Q8.2,9.8 7.2,9.8 H5.8 M2.4,3.9 H8.2 M2.4,6.6 H8.2" fill="none" stroke="#6a6a6a" stroke-width="1.08"/>
<line x1="947.2" x2="947.2" y1="780" y2="788" stroke="#ccd6eb" stroke-width="1"/>
<text x="927.9" y="797" font-family='"Liberation Sans", sans-serif' font-size="10" fill="#6a6a6a" letter-spacing="0.3">26.</text>
<path transform="translate(947.55,789.00) scale(0.880)" d="M1.2,1.2 H8.8 M4.6,1.2 L3.4,9.2 M1.8,4.8 H7.6 V9.2 M0.4,9.2 H9.6" fill="none" stroke="#6a6a6a" stroke-width="1.08"/>
<path transform="translate(957.75,789.00) scale(0.880)" d="M2.4,1 V6 Q2.4,8.6 0.6,9.8 M2.4,1 H8.2 V8.8 Q8.2,9.8 7.2,9.8 H5.8 M2.4,3.9 H8.2 M2.4,6.6 H8.2" fill="none" stroke="#6a6a6a" stroke-width="1.08"/>
<line x1="1008.9" x2="1008.9" y1="780" y2="788" stroke="#ccd6eb" stroke-width="1"/>
<text x="992.6" y="797" font-family='"Liberation Sans", sans-serif' font-size="10" fill="#6a6a6a" letter-spacing="0.3">9.</text>
<path transform="translate(1006.10,789.00) scale(0.880)" d="M4.4,0 L5.6,1.8 M0.4,3.2 H9.6 M3.6,5.4 L1,9.6 M6.4,5.4 L9.2,9.6" fill="none" stroke="#6a6a6a" stroke-width="1.08"/>
<path transform="translate(1016.30,789.00) scale(0.880)" d="M2.4,1 V6 Q2.4,8.6 0.6,9.8 M2.4,1 H8.2 V8.8 Q8.2,9.8 7.2,9.8 H5.8 M2.4,3.9 H8.2 M2.4,6.6 H8.2" fill="none" stroke="#6a6a6a" stroke-width="1.08"/>
<line x1="1070.5" x2="1070.5" y1="780" y2="788" stroke="#ccd6eb" stroke-width="1"/>
<text x="1051.2" y="797" font-family='"Liberation Sans", sans-serif' font-size="10" fill="#6a6a6a" letter-spacing="0.3">23.</text>
<path transform="translate(1070.85,789.00) scale(0.880)" d="M4.4,0 L5.6,1.8 M0.4,3.2 H9.6 M3.6,5.4 L1,9.6 M6.4,5.4 L9.2,9.6" fill="none" stroke="#6a6a6a" stroke-width="1.08"/>
<path transform="translate(1081.05,789.00) scale(0.880)" d="M2.4,1 V6 Q2.4,8.6 0.6,9.8 M2.4,1 H8.2 V8.8 Q8.2,9.8 7.2,9.8 H5.8 M2.4,3.9 H8.2 M2.4,6.6 H8.2" fill="none" stroke="#6a6a6a" stroke-width="1.08"/>
<line x1="1132.1" x2="1132.1" y1="780" y2="788" stroke="#ccd6eb" stroke-width="1"/>
<text x="1115.9" y="797" font-family='"Liberation Sans", sans-serif' font-size="10" fill="#6a6a6a" letter-spacing="0.3">7.</text>
<path transform="translate(1129.40,789.00) scale(0.880)" d="M0.4,5.2 L9.6,3.6 M3.6,0 V8.4 Q3.6,9.6 5,9.6 H9.4 V7.8" fill="none" stroke="#6a6a6a" stroke-width="1.08"/>
<path transform="translate(1139.60,789.00) scale(0.880)" d="M2.4,1 V6 Q2.4,8.6 0.6,9.8 M2.4,1 H8.2 V8.8 Q8.2,9.8 7.2,9.8 H5.8 M2.4,3.9 H8.2 M2.4,6.6 H8.2" fill="none" stroke="#6a6a6a" stroke-width="1.08"/>
<line x1="1193.8" x2="1193.8" y1="780" y2="788" stroke="#ccd6eb" stroke-width="1"/>
<text x="1174.5" y="797" font-family='"Liberation Sans", sans-serif' font-size="10" fill="#6a6a6a" letter-spacing="0.3">21.</text>
<path transform="translate(1194.15,789.00) scale(0.880)" d="M0.4,5.2 L9.6,3.6 M3.6,0 V8.4 Q3.6,9.6 5,9.6 H9.4 V7.8" fill="none" stroke="#6a6a6a" stroke-width="1.08"/>
<path transform="translate(1204.35,789.00) scale(0.880)" d="M2.4,1 V6 Q2.4,8.6 0.6,9.8 M2.4,1 H8.2 V8.8 Q8.2,9.8 7.2,9.8 H5.8 M2.4,3.9 H8.2 M2.4,6.6 H8.2" fill="none" stroke="#6a6a6a" stroke-width="1.08"/>
<line x1="1255.4" x2="1255.4" y1="780" y2="788" stroke="#ccd6eb" stroke-width="1"/>
<text x="1239.2" y="797" font-family='"Liberation Sans", sans-serif' font-size="10" fill="#6a6a6a" letter-spacing="0.3">4.</text>
<path transform="translate(1252.70,789.00) scale(0.880)" d="M3.6,1 Q3.6,6.4 0.4,9.6 M6.2,1 Q6.6,6.4 9.6,9.6" fill="none" stroke="#6a6a6a" stroke-width="1.08"/>
<path transform="translate(1262.90,789.00) scale(0.880)" d="M2.4,1 V6 Q2.4,8.6 0.6,9.8 M2.4,1 H8.2 V8.8 Q8.2,9.8 7.2,9.8 H5.8 M2.4,3.9 H8.2 M2.4,6.6 H8.2" fill="none" stroke="#6a6a6a" stroke-width="1.08"/>
<line x1="1317.1" x2="1317.1" y1="780" y2="788" stroke="#ccd6eb" stroke-width="1"/>
<text x="1297.8" y="797" font-family='"Liberation Sans", sans-serif' font-size="10" fill="#6a6a6a" letter-spacing="0.3">18.</text>
<path transform="translate(1317.45,789.00) scale(0.880)" d="M3.6,1 Q3.6,6.4 0.4,9.6 M6.2,1 Q6.6,6.4 9.6,9.6" fill="none" stroke="#6a6a6a" stroke-width="1.08"/>
<path transform="translate(1327.65,789.00) scale(0.880)" d="M2.4,1 V6 Q2.4,8.6 0.6,9.8 M2.4,1 H8.2 V8.8 Q8.2,9.8 7.2,9.8 H5.8 M2.4,3.9 H8.2 M2.4,6.6 H8.2" fill="none" stroke="#6a6a6a" stroke-width="1.08"/>
<line x1="1378.7" x2="1378.7" y1="780" y2="788" stroke="#ccd6eb" stroke-width="1"/>
<text x="1362.5" y="797" font-family='"Liberation Sans", sans-serif' font-size="10" fill="#6a6a6a" letter-spacing="0.3">1.</text>
<path transform="translate(1376.00,789.00) scale(0.880)" d="M4,0 Q4,6.2 0.4,9.6 M1,3.2 H7 V8.6 Q7,9.6 8,9.6 H9.6 V7.8" fill="none" stroke="#6a6a6a" stroke-width="1.08"/>
<path transform="translate(1386.20,789.00) scale(0.880)" d="M2.4,1 V6 Q2.4,8.6 0.6,9.8 M2.4,1 H8.2 V8.8 Q8.2,9.8 7.2,9.8 H5.8 M2.4,3.9 H8.2 M2.4,6.6 H8.2" fill="none" stroke="#6a6a6a" stroke-width="1.08"/>
<line x1="1440.4" x2="1440.4" y1="780" y2="788" stroke="#ccd6eb" stroke-width="1"/>
<text x="1421.0" y="797" font-family='"Liberation Sans", sans-serif' font-size="10" fill="#6a6a6a" letter-spacing="0.3">15.</text>
<path transform="translate(1440.75,789.00) scale(0.880)" d="M4,0 Q4,6.2 0.4,9.6 M1,3.2 H7 V8.6 Q7,9.6 8,9.6 H9.6 V7.8" fill="none" stroke="#6a6a6a" stroke-width="1.08"/>
<path transform="translate(1450.95,789.00) scale(0.880)" d="M2.4,1 V6 Q2.4,8.6 0.6,9.8 M2.4,1 H8.2 V8.8 Q8.2,9.8 7.2,9.8 H5.8 M2.4,3.9 H8.2 M2.4,6.6 H8.2" fill="none" stroke="#6a6a6a" stroke-width="1.08"/>
<line x1="1502.0" x2="1502.0" y1="780" y2="788" stroke="#ccd6eb" stroke-width="1"/>
<text x="1482.7" y="797" font-family='"Liberation Sans", sans-serif' font-size="10" fill="#6a6a6a" letter-spacing="0.3">29.</text>
<path transform="translate(1502.40,789.00) scale(0.880)" d="M4,0 Q4,6.2 0.4,9.6 M1,3.2 H7 V8.6 Q7,9.6 8,9.6 H9.6 V7.8" fill="none" stroke="#6a6a6a" stroke-width="1.08"/>
<path transform="translate(1512.60,789.00) scale(0.880)" d="M2.4,1 V6 Q2.4,8.6 0.6,9.8 M2.4,1 H8.2 V8.8 Q8.2,9.8 7.2,9.8 H5.8 M2.4,3.9 H8.2 M2.4,6.6 H8.2" fill="none" stroke="#6a6a6a" stroke-width="1.08"/>
<line x1="1563.7" x2="1563.7" y1="780" y2="788" stroke="#ccd6eb" stroke-width="1"/>
<text x="1544.3" y="797" font-family='"Liberation Sans", sans-serif' font-size="10" fill="#6a6a6a" letter-spacing="0.3">13.</text>
<path transform="translate(1564.05,789.00) scale(0.880)" d="M0.4,4.1 H9.6 M5,0 V10" fill="none" stroke="#6a6a6a" stroke-width="1.08"/>
<path transform="translate(1574.25,789.00) scale(0.880)" d="M2.4,1 V6 Q2.4,8.6 0.6,9.8 M2.4,1 H8.2 V8.8 Q8.2,9.8 7.2,9.8 H5.8 M2.4,3.9 H8.2 M2.4,6.6 H8.2" fill="none" stroke="#6a6a6a" stroke-width="1.08"/>
<line x1="1625.3" x2="1625.3" y1="780" y2="788" stroke="#ccd6eb" stroke-width="1"/>
<text x="1599.3" y="797" font-family='"Liberation Sans", sans-serif' font-size="10" fill="#6a6a6a" letter-spacing="0.3">27.</text>
<path transform="translate(1619.00,789.00) scale(0.880)" d="M0.4,4.1 H9.6 M5,0 V10" fill="none" stroke="#6a6a6a" stroke-width="1.08"/>
<path transform="translate(1629.20,789.00) scale(0.880)" d="M2.4,1 V6 Q2.4,8.6 0.6,9.8 M2.4,1 H8.2 V8.8 Q8.2,9.8 7.2,9.8 H5.8 M2.4,3.9 H8.2 M2.4,6.6 H8.2" fill="none" stroke="#6a6a6a" stroke-width="1.08"/>
<circle cx="481.2" cy="810.2" r="5.5" fill="#4572a7"/>
<text x="493.2" y="814.3" font-family='"Liberation Sans", sans-serif' font-size="11.5" font-weight="bold" fill="#3a3a3a">PnL</text>
<line x1="530.8" x2="545.2" y1="810.2" y2="810.2" stroke="#d87070" stroke-width="1.5"/>
<text x="550.3" y="814.3" font-family='"Liberation Sans", sans-serif' font-size="11.5" font-weight="bold" fill="#3a3a3a">Benchmark return</text>
<circle cx="674.6" cy="810.2" r="5.5" fill="#434348"/>
<text x="687" y="814.3" font-family='"Liberation Sans", sans-serif' font-size="11.5" font-weight="bold" fill="#3a3a3a">Period P&amp;L</text>
<circle cx="772" cy="810.2" r="5.5" fill="#90ed7d"/>
<text x="784.5" y="814.3" font-family='"Liberation Sans", sans-serif' font-size="11.5" font-weight="bold" fill="#3a3a3a">Trade Vol</text>
<circle cx="862" cy="810.2" r="5.5" fill="#f7a35c"/>
<text x="874.5" y="814.3" font-family='"Liberation Sans", sans-serif' font-size="11.5" font-weight="bold" fill="#3a3a3a">Position long</text>
<circle cx="972" cy="810.2" r="5.5" fill="#8085e9"/>
<text x="984.5" y="814.3" font-family='"Liberation Sans", sans-serif' font-size="11.5" font-weight="bold" fill="#3a3a3a">Position short</text>
<line x1="1080" x2="1094.5" y1="810.2" y2="810.2" stroke="#a8955a" stroke-width="1.5"/>
<text x="1099" y="814.3" font-family='"Liberation Sans", sans-serif' font-size="11.5" font-weight="bold" fill="#3a3a3a">Asset utilization</text>
<rect x="24.5" y="821" width="1604" height="19.5" fill="#d3d8e0"/>
<rect x="24.5" y="822.8" width="1604" height="16.2" fill="#c7d4e5"/>
<line x1="38.2" x2="38.2" y1="822" y2="839.5" stroke="#bfccdc" stroke-width="1"/>
<path transform="translate(42.10,828.80) scale(0.860)" d="M0.4,4.1 H9.6 M5,0 V10" fill="none" stroke="#a9b6c8" stroke-width="1.10"/>
<path transform="translate(52.30,828.80) scale(0.860)" d="M0.4,5.2 H9.6" fill="none" stroke="#a9b6c8" stroke-width="1.10"/>
<path transform="translate(62.50,828.80) scale(0.860)" d="M2.4,1 V6 Q2.4,8.6 0.6,9.8 M2.4,1 H8.2 V8.8 Q8.2,9.8 7.2,9.8 H5.8 M2.4,3.9 H8.2 M2.4,6.6 H8.2" fill="none" stroke="#a9b6c8" stroke-width="1.10"/>
<text x="75.3" y="836.6" font-family='"Liberation Sans", sans-serif' font-size="10" fill="#a9b6c8" letter-spacing="0.3">'24</text>
<line x1="170.7" x2="170.7" y1="822" y2="839.5" stroke="#bfccdc" stroke-width="1"/>
<path transform="translate(174.60,828.80) scale(0.860)" d="M0.4,4.1 H9.6 M5,0 V10" fill="none" stroke="#a9b6c8" stroke-width="1.10"/>
<path transform="translate(184.80,828.80) scale(0.860)" d="M1.4,2.2 H8.6 M0.4,8.8 H9.6" fill="none" stroke="#a9b6c8" stroke-width="1.10"/>
<path transform="translate(195.00,828.80) scale(0.860)" d="M2.4,1 V6 Q2.4,8.6 0.6,9.8 M2.4,1 H8.2 V8.8 Q8.2,9.8 7.2,9.8 H5.8 M2.4,3.9 H8.2 M2.4,6.6 H8.2" fill="none" stroke="#a9b6c8" stroke-width="1.10"/>
<text x="207.8" y="836.6" font-family='"Liberation Sans", sans-serif' font-size="10" fill="#a9b6c8" letter-spacing="0.3">'24</text>
<line x1="307.6" x2="307.6" y1="822" y2="839.5" stroke="#bfccdc" stroke-width="1"/>
<path transform="translate(311.50,828.80) scale(0.860)" d="M0.4,5.2 H9.6" fill="none" stroke="#a9b6c8" stroke-width="1.10"/>
<path transform="translate(321.70,828.80) scale(0.860)" d="M2.4,1 V6 Q2.4,8.6 0.6,9.8 M2.4,1 H8.2 V8.8 Q8.2,9.8 7.2,9.8 H5.8 M2.4,3.9 H8.2 M2.4,6.6 H8.2" fill="none" stroke="#a9b6c8" stroke-width="1.10"/>
<text x="334.5" y="836.6" font-family='"Liberation Sans", sans-serif' font-size="10" fill="#a9b6c8" letter-spacing="0.3">'25</text>
<line x1="444.5" x2="444.5" y1="822" y2="839.5" stroke="#bfccdc" stroke-width="1"/>
<path transform="translate(448.40,828.80) scale(0.860)" d="M1.4,2.2 H8.6 M0.4,8.8 H9.6" fill="none" stroke="#a9b6c8" stroke-width="1.10"/>
<path transform="translate(458.60,828.80) scale(0.860)" d="M2.4,1 V6 Q2.4,8.6 0.6,9.8 M2.4,1 H8.2 V8.8 Q8.2,9.8 7.2,9.8 H5.8 M2.4,3.9 H8.2 M2.4,6.6 H8.2" fill="none" stroke="#a9b6c8" stroke-width="1.10"/>
<text x="471.4" y="836.6" font-family='"Liberation Sans", sans-serif' font-size="10" fill="#a9b6c8" letter-spacing="0.3">'25</text>
<line x1="568.2" x2="568.2" y1="822" y2="839.5" stroke="#bfccdc" stroke-width="1"/>
<path transform="translate(572.10,828.80) scale(0.860)" d="M1.2,1.2 H8.8 M1.8,5 H8.2 M0.4,9.2 H9.6" fill="none" stroke="#a9b6c8" stroke-width="1.10"/>
<path transform="translate(582.30,828.80) scale(0.860)" d="M2.4,1 V6 Q2.4,8.6 0.6,9.8 M2.4,1 H8.2 V8.8 Q8.2,9.8 7.2,9.8 H5.8 M2.4,3.9 H8.2 M2.4,6.6 H8.2" fill="none" stroke="#a9b6c8" stroke-width="1.10"/>
<text x="595.1" y="836.6" font-family='"Liberation Sans", sans-serif' font-size="10" fill="#a9b6c8" letter-spacing="0.3">'25</text>
<line x1="705.0" x2="705.0" y1="822" y2="839.5" stroke="#bfccdc" stroke-width="1"/>
<path transform="translate(708.90,828.80) scale(0.860)" d="M1,1.2 V9.6 M1,1.2 H9 V9.6 M1,8.6 H9 M3.8,1.2 V4.5 Q3.6,6.6 1.6,7.4 M6.2,1.2 V5.8 Q6.2,6.6 7,6.6 H9" fill="none" stroke="#a9b6c8" stroke-width="1.10"/>
<path transform="translate(719.10,828.80) scale(0.860)" d="M2.4,1 V6 Q2.4,8.6 0.6,9.8 M2.4,1 H8.2 V8.8 Q8.2,9.8 7.2,9.8 H5.8 M2.4,3.9 H8.2 M2.4,6.6 H8.2" fill="none" stroke="#a9b6c8" stroke-width="1.10"/>
<text x="731.9" y="836.6" font-family='"Liberation Sans", sans-serif' font-size="10" fill="#a9b6c8" letter-spacing="0.3">'25</text>
<line x1="837.5" x2="837.5" y1="822" y2="839.5" stroke="#bfccdc" stroke-width="1"/>
<path transform="translate(841.40,828.80) scale(0.860)" d="M1.2,1.2 H8.8 M4.6,1.2 L3.4,9.2 M1.8,4.8 H7.6 V9.2 M0.4,9.2 H9.6" fill="none" stroke="#a9b6c8" stroke-width="1.10"/>
<path transform="translate(851.60,828.80) scale(0.860)" d="M2.4,1 V6 Q2.4,8.6 0.6,9.8 M2.4,1 H8.2 V8.8 Q8.2,9.8 7.2,9.8 H5.8 M2.4,3.9 H8.2 M2.4,6.6 H8.2" fill="none" stroke="#a9b6c8" stroke-width="1.10"/>
<text x="864.4" y="836.6" font-family='"Liberation Sans", sans-serif' font-size="10" fill="#a9b6c8" letter-spacing="0.3">'25</text>
<line x1="974.4" x2="974.4" y1="822" y2="839.5" stroke="#bfccdc" stroke-width="1"/>
<path transform="translate(978.30,828.80) scale(0.860)" d="M4.4,0 L5.6,1.8 M0.4,3.2 H9.6 M3.6,5.4 L1,9.6 M6.4,5.4 L9.2,9.6" fill="none" stroke="#a9b6c8" stroke-width="1.10"/>
<path transform="translate(988.50,828.80) scale(0.860)" d="M2.4,1 V6 Q2.4,8.6 0.6,9.8 M2.4,1 H8.2 V8.8 Q8.2,9.8 7.2,9.8 H5.8 M2.4,3.9 H8.2 M2.4,6.6 H8.2" fill="none" stroke="#a9b6c8" stroke-width="1.10"/>
<text x="1001.3" y="836.6" font-family='"Liberation Sans", sans-serif' font-size="10" fill="#a9b6c8" letter-spacing="0.3">'25</text>
<line x1="1107.0" x2="1107.0" y1="822" y2="839.5" stroke="#bfccdc" stroke-width="1"/>
<path transform="translate(1110.90,828.80) scale(0.860)" d="M0.4,5.2 L9.6,3.6 M3.6,0 V8.4 Q3.6,9.6 5,9.6 H9.4 V7.8" fill="none" stroke="#a9b6c8" stroke-width="1.10"/>
<path transform="translate(1121.10,828.80) scale(0.860)" d="M2.4,1 V6 Q2.4,8.6 0.6,9.8 M2.4,1 H8.2 V8.8 Q8.2,9.8 7.2,9.8 H5.8 M2.4,3.9 H8.2 M2.4,6.6 H8.2" fill="none" stroke="#a9b6c8" stroke-width="1.10"/>
<text x="1133.9" y="836.6" font-family='"Liberation Sans", sans-serif' font-size="10" fill="#a9b6c8" letter-spacing="0.3">'25</text>
<line x1="1243.8" x2="1243.8" y1="822" y2="839.5" stroke="#bfccdc" stroke-width="1"/>
<path transform="translate(1247.70,828.80) scale(0.860)" d="M3.6,1 Q3.6,6.4 0.4,9.6 M6.2,1 Q6.6,6.4 9.6,9.6" fill="none" stroke="#a9b6c8" stroke-width="1.10"/>
<path transform="translate(1257.90,828.80) scale(0.860)" d="M2.4,1 V6 Q2.4,8.6 0.6,9.8 M2.4,1 H8.2 V8.8 Q8.2,9.8 7.2,9.8 H5.8 M2.4,3.9 H8.2 M2.4,6.6 H8.2" fill="none" stroke="#a9b6c8" stroke-width="1.10"/>
<text x="1270.7" y="836.6" font-family='"Liberation Sans", sans-serif' font-size="10" fill="#a9b6c8" letter-spacing="0.3">'25</text>
<line x1="1380.7" x2="1380.7" y1="822" y2="839.5" stroke="#bfccdc" stroke-width="1"/>
<path transform="translate(1384.60,828.80) scale(0.860)" d="M4,0 Q4,6.2 0.4,9.6 M1,3.2 H7 V8.6 Q7,9.6 8,9.6 H9.6 V7.8" fill="none" stroke="#a9b6c8" stroke-width="1.10"/>
<path transform="translate(1394.80,828.80) scale(0.860)" d="M2.4,1 V6 Q2.4,8.6 0.6,9.8 M2.4,1 H8.2 V8.8 Q8.2,9.8 7.2,9.8 H5.8 M2.4,3.9 H8.2 M2.4,6.6 H8.2" fill="none" stroke="#a9b6c8" stroke-width="1.10"/>
<text x="1407.6" y="836.6" font-family='"Liberation Sans", sans-serif' font-size="10" fill="#a9b6c8" letter-spacing="0.3">'25</text>
<line x1="1513.2" x2="1513.2" y1="822" y2="839.5" stroke="#bfccdc" stroke-width="1"/>
<path transform="translate(1517.10,828.80) scale(0.860)" d="M0.4,4.1 H9.6 M5,0 V10" fill="none" stroke="#a9b6c8" stroke-width="1.10"/>
<path transform="translate(1527.30,828.80) scale(0.860)" d="M2.4,1 V6 Q2.4,8.6 0.6,9.8 M2.4,1 H8.2 V8.8 Q8.2,9.8 7.2,9.8 H5.8 M2.4,3.9 H8.2 M2.4,6.6 H8.2" fill="none" stroke="#a9b6c8" stroke-width="1.10"/>
<text x="1540.1" y="836.6" font-family='"Liberation Sans", sans-serif' font-size="10" fill="#a9b6c8" letter-spacing="0.3">'25</text>
<rect x="21.0" y="823.5" width="7" height="14" rx="1" fill="#f2f2f2" stroke="#999" stroke-width="1"/>
<line x1="23.2" x2="23.2" y1="827" y2="834" stroke="#888" stroke-width="0.9"/>
<line x1="25.8" x2="25.8" y1="827" y2="834" stroke="#888" stroke-width="0.9"/>
<rect x="1624.5" y="823.5" width="7" height="14" rx="1" fill="#f2f2f2" stroke="#999" stroke-width="1"/>
<line x1="1626.7" x2="1626.7" y1="827" y2="834" stroke="#888" stroke-width="0.9"/>
<line x1="1629.3" x2="1629.3" y1="827" y2="834" stroke="#888" stroke-width="0.9"/>
</svg>
<div class="abs" style="left:1638px;top:774px;width:34px;height:34px;border-radius:17px;background:#fff;box-shadow:0 0 14px rgba(0,0,0,0.07)"></div>
<svg class="abs" style="left:1646px;top:782px" width="18" height="18" viewBox="0 0 18 18"><g stroke="#222" stroke-width="1.3" fill="none"><path d="M3,3 H15"/><path d="M9,15 V6 M6,9 L9,6 L12,9"/></g></svg>
</body></html>
